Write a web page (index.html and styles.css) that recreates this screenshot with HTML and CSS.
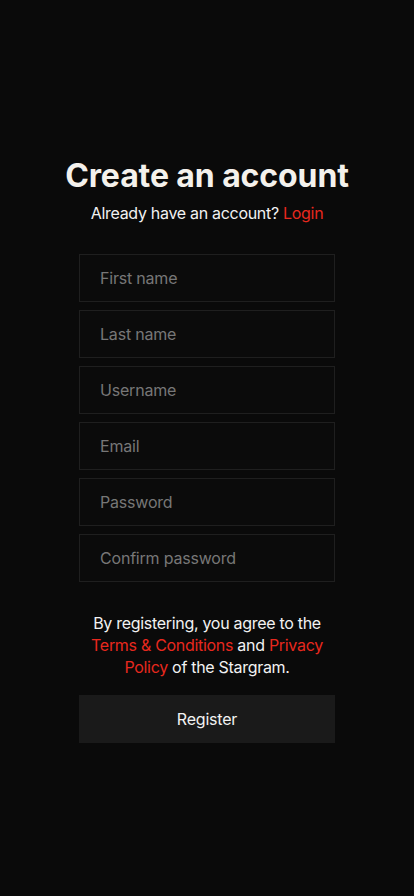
FILE: index.html
```html
<!DOCTYPE html>
<html lang="en">
<head>
<meta charset="utf-8">
<title>Create an account</title>
<link rel="stylesheet" href="styles.css">
</head>
<body>
<main class="page">
  <form class="card">
    <h1 class="title">Create an account</h1>
    <p class="subtitle">Already have an account? <a class="link" href="#">Login</a></p>
    <div class="fields">
      <input class="field" type="text" placeholder="First name">
      <input class="field" type="text" placeholder="Last name">
      <input class="field" type="text" placeholder="Username">
      <input class="field" type="email" placeholder="Email">
      <input class="field" type="password" placeholder="Password">
      <input class="field" type="password" placeholder="Confirm password">
    </div>
    <p class="terms">By registering, you agree to the <a class="link" href="#">Terms &amp; Conditions</a> and <a class="link" href="#">Privacy Policy</a> of the Stargram.</p>
    <button class="btn" type="button">Register</button>
  </form>
</main>
</body>
</html>
```
FILE: styles.css
```css
* { box-sizing: border-box; }
html, body {
  margin: 0;
  padding: 0;
  background: #0a0a0a;
  min-height: 100%;
}
body {
  font-family: Inter, "Noto Sans", sans-serif;
  color: #f2f2f2;
  min-height: 896px;
}
.page {
  display: flex;
  justify-content: center;
  padding-top: 156px;
}
.card {
  width: 256px;
  display: flex;
  flex-direction: column;
  align-items: stretch;
}
.title {
  align-self: center;
  margin: 0;
  font-size: 32px;
  line-height: 40px;
  font-weight: 700;
  text-align: center;
  white-space: nowrap;
  letter-spacing: -0.1px;
  color: #f4f1ec;
}
.subtitle {
  align-self: center;
  margin: 6px 0 0;
  font-size: 16px;
  line-height: 22px;
  text-align: center;
  white-space: nowrap;
  letter-spacing: -0.3px;
  color: #f2f2f2;
}
.link {
  color: #e8281e;
  text-decoration: none;
}
.fields {
  margin-top: 30px;
  display: flex;
  flex-direction: column;
  gap: 8px;
}
.field {
  height: 48px;
  width: 100%;
  background: #0b0b0b;
  border: 1px solid #1f1f1f;
  border-radius: 0;
  padding: 0 20px;
  font-family: inherit;
  font-size: 16px;
  color: #eee;
  outline: none;
  letter-spacing: -0.2px;
}
.field::placeholder {
  color: #777;
}
.terms {
  margin: 30px 0 0;
  font-size: 16px;
  line-height: 22px;
  text-align: center;
  letter-spacing: -0.3px;
  color: #f2f2f2;
}
.btn {
  margin-top: 17px;
  height: 48px;
  width: 100%;
  background: #1a1a1a;
  border: none;
  border-radius: 0;
  color: #f2f2f2;
  font-family: inherit;
  font-size: 16px;
  letter-spacing: -0.2px;
}
```
